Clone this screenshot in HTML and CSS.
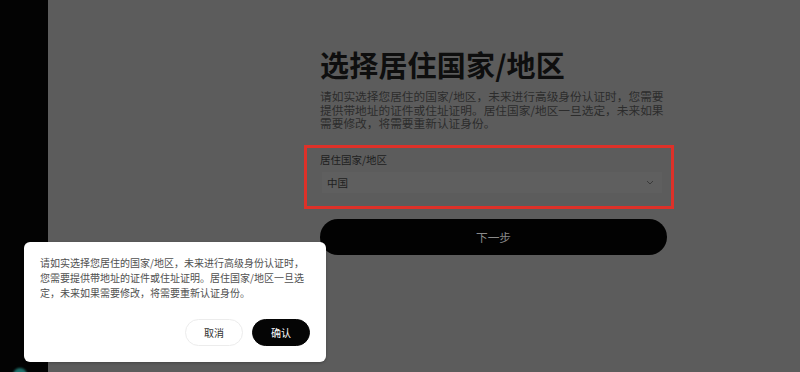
FILE: index.html
```html
<!DOCTYPE html>
<html lang="zh-CN">
<head>
<meta charset="utf-8">
<title>选择居住国家/地区</title>
<link rel="stylesheet" href="styles.css">
</head>
<body>
<div class="page">
  <aside class="sidebar"></aside>
  <main class="main">
    <section class="column">
      <h1 class="title">选择居住国家/地区</h1>
      <p class="desc">请如实选择您居住的国家/地区，未来进行高级身份认证时，您需要提供带地址的证件或住址证明。居住国家/地区一旦选定，未来如果需要修改，将需要重新认证身份。</p>
      <div class="field-box">
        <div class="label">居住国家/地区</div>
        <div class="select">
          <span class="select-value">中国</span>
          <svg class="chevron" width="8" height="5" viewBox="0 0 8 5"><path d="M1 1l3 3 3-3" fill="none" stroke="#3a3a3a" stroke-width="1"/></svg>
        </div>
      </div>
      <button class="next">下一步</button>
    </section>
  </main>
</div>
<div class="dialog">
  <p class="dialog-text">请如实选择您居住的国家/地区，未来进行高级身份认证时，您需要提供带地址的证件或住址证明。居住国家/地区一旦选定，未来如果需要修改，将需要重新认证身份。</p>
  <div class="dialog-actions">
    <button class="btn btn-cancel">取消</button>
    <button class="btn btn-ok">确认</button>
  </div>
</div>
<div class="float-dot"></div>
</body>
</html>
```
FILE: styles.css
```css
html, body {
  margin: 0;
  padding: 0;
  width: 800px;
  height: 372px;
  overflow: hidden;
  font-family: "Noto Sans CJK SC", "Noto Sans", sans-serif;
}
.page {
  display: flex;
  width: 800px;
  height: 372px;
}
.sidebar {
  width: 48px;
  flex: none;
  background: #030303;
}
.main {
  flex: 1;
  background: #5c5c5c;
  padding-left: 272px;
  padding-top: 46px;
}
.column {
  width: 346px;
}
.title {
  margin: 0;
  font-size: 29px;
  line-height: 36px;
  font-weight: 700;
  color: #0e0e0e;
  letter-spacing: 0.2px;
}
.desc {
  margin: 7px 0 0 0;
  font-size: 11.7px;
  line-height: 13.5px;
  color: #2c2c2c;
}
.field-box {
  margin: 15px -8px 0 -16px;
  border: 3px solid #de3129;
  padding: 5px 9px 13px 13px;
}
.label {
  font-size: 10.5px;
  line-height: 14px;
  color: #1e1e1e;
}
.select {
  margin: 5px 0 0 2px;
  height: 21px;
  background: #5f5f5f;
  display: flex;
  align-items: center;
  justify-content: space-between;
  padding: 0 8px 0 5px;
}
.select-value {
  font-size: 10.5px;
  color: #1e1e1e;
}
.chevron {
  display: block;
}
.next {
  display: block;
  margin-top: 10px;
  width: 347px;
  height: 36px;
  border: none;
  border-radius: 18px;
  background: #020202;
  color: #8a8a8a;
  font-family: inherit;
  font-size: 11.7px;
}
.dialog {
  position: absolute;
  left: 24px;
  top: 242px;
  width: 302px;
  height: 120px;
  box-sizing: border-box;
  background: #ffffff;
  border-radius: 6px;
  padding: 13px 16px 16px 16px;
  box-shadow: 0 1px 3px rgba(0,0,0,0.25);
}
.dialog-text {
  margin: 0;
  font-size: 10px;
  line-height: 15px;
  color: #505050;
}
.dialog-actions {
  display: flex;
  justify-content: flex-end;
  gap: 9px;
  margin-top: 19px;
}
.btn {
  width: 58px;
  height: 27px;
  border-radius: 14px;
  font-family: inherit;
  font-size: 10px;
  padding: 0;
}
.btn-cancel {
  background: #ffffff;
  border: 1px solid #ececec;
  color: #333333;
}
.btn-ok {
  background: #050505;
  border: 1px solid #050505;
  color: #ffffff;
}
.float-dot {
  position: absolute;
  left: 13px;
  top: 368px;
  width: 14px;
  height: 14px;
  border-radius: 50%;
  background: #1f6f6a;
  filter: blur(1px);
}
```
